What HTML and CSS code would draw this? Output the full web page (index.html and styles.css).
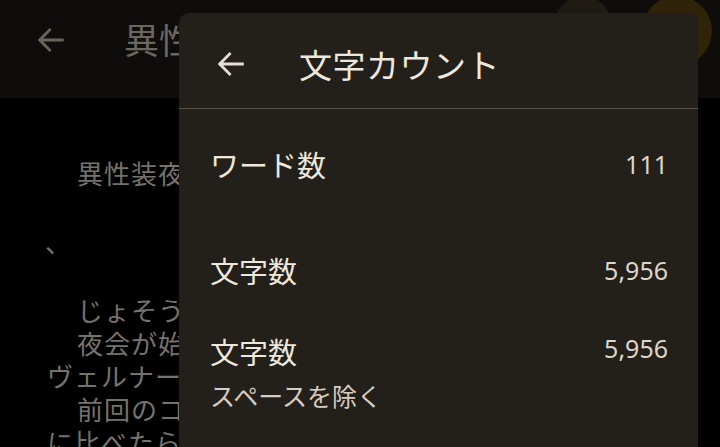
FILE: index.html
```html
<!DOCTYPE html>
<html lang="ja">
<head>
    <meta charset="UTF-8">
    <meta name="viewport" content="width=device-width, initial-scale=1.0">
    <title>文字カウント</title>
    <link rel="stylesheet" href="styles.css">
</head>
<body>

<div class="app">
    <header class="appbar">
        <svg class="back back-dim" viewBox="0 0 24 24"><path d="M20 12H5M11 5l-7 7 7 7"/></svg>
        <h1 class="doc-title">異性装夜会</h1>
        <div class="avatars">
            <span class="avatar avatar-dark"></span>
            <span class="avatar avatar-gold"></span>
        </div>
    </header>

    <main class="doc">
        <p class="line indent">異性装夜会の招待状</p>
        <p class="line comma">、</p>
        <p class="line indent">じょそうの準備</p>
        <p class="line indent">夜会が始まる</p>
        <p class="line">ヴェルナー卿</p>
        <p class="line indent">前回のコンテスト</p>
        <p class="line">に比べたら</p>
    </main>
</div>

<div class="dialog">
    <div class="dialog-head">
        <svg class="back" viewBox="0 0 24 24"><path d="M20 12H5M11 5l-7 7 7 7"/></svg>
        <h2 class="dialog-title">文字カウント</h2>
    </div>
    <div class="stats">
        <div class="stat">
            <div class="stat-label">ワード数</div>
            <div class="stat-value">111</div>
        </div>
        <div class="stat">
            <div class="stat-label">文字数</div>
            <div class="stat-value">5,956</div>
        </div>
        <div class="stat stat-sub">
            <div class="stat-text">
                <div class="stat-label">文字数</div>
                <div class="stat-note">スペースを除く</div>
            </div>
            <div class="stat-value">5,956</div>
        </div>
    </div>
</div>

</body>
</html>
```

FILE: styles.css
```css
body {
    margin: 0;
    padding: 0;
    background-color: #000;
    font-family: 'Noto Sans CJK JP', 'Noto Sans', sans-serif;
    width: 720px;
    height: 447px;
    overflow: hidden;
    position: relative;
}

.app {
    height: 447px;
    overflow: hidden;
}

.appbar {
    height: 98px;
    background-color: #0f0d0b;
    display: flex;
    align-items: flex-start;
    overflow: hidden;
}

.back {
    width: 34px;
    height: 34px;
    fill: none;
    stroke: #e6ded2;
    stroke-width: 2;
    stroke-linecap: square;
}

.back-dim {
    stroke: #6a655d;
    margin: 23px 0 0 34px;
}

.doc-title {
    margin: 13px 0 0 56px;
    width: 55px;
    overflow: hidden;
    font-size: 35px;
    font-weight: 400;
    color: #6b665f;
    white-space: nowrap;
    line-height: 52px;
}

.avatars {
    margin-left: auto;
    display: flex;
    gap: 30px;
    margin-right: 8px;
    margin-top: -4px;
}

.avatar {
    display: block;
    border-radius: 50%;
}

.avatar-dark {
    width: 58px;
    height: 62px;
    background-color: #1f1a13;
}

.avatar-gold {
    width: 70px;
    height: 70px;
    background-color: #2f2309;
}

.doc {
    width: 132px;
    padding: 58px 0 0 47px;
    color: #77726b;
    font-size: 26px;
    letter-spacing: 1px;
}

.line {
    margin: 0;
    line-height: 33px;
    white-space: nowrap;
    overflow: hidden;
}

.indent {
    padding-left: 30px;
}

.comma {
    margin: 36px 0 35px -2px;
}

.dialog {
    position: absolute;
    left: 179px;
    top: 13px;
    width: 519px;
    height: 434px;
    background-color: #231f1a;
    border-radius: 10px 10px 0 0;
    color: #eee7dc;
}

.dialog-head {
    height: 95px;
    border-bottom: 1px solid #5a5245;
    display: flex;
    align-items: center;
    padding-left: 35px;
}

.dialog-head .back {
    margin-top: 6px;
}

.dialog-title {
    margin: 6px 0 0 51px;
    font-size: 33px;
    font-weight: 400;
    letter-spacing: 0.5px;
}

.stats {
    padding: 0 30px 0 31px;
}

.stat {
    display: flex;
    justify-content: space-between;
    align-items: flex-start;
}

.stat:first-child {
    padding-top: 34px;
    height: 106px;
}

.stat:nth-child(2) {
    height: 81px;
}

.stat-label {
    font-size: 29px;
    line-height: 42px;
}

.stat-note {
    font-size: 25px;
    line-height: 32px;
    color: #d4cdc2;
    margin-top: 7px;
}

.stat-value {
    font-family: 'Noto Sans', sans-serif;
    font-size: 25px;
    line-height: 36px;
    color: #dcd5ca;
}

.stat:first-child .stat-value,
.stat:nth-child(2) .stat-value {
    margin-top: 3px;
}
```
